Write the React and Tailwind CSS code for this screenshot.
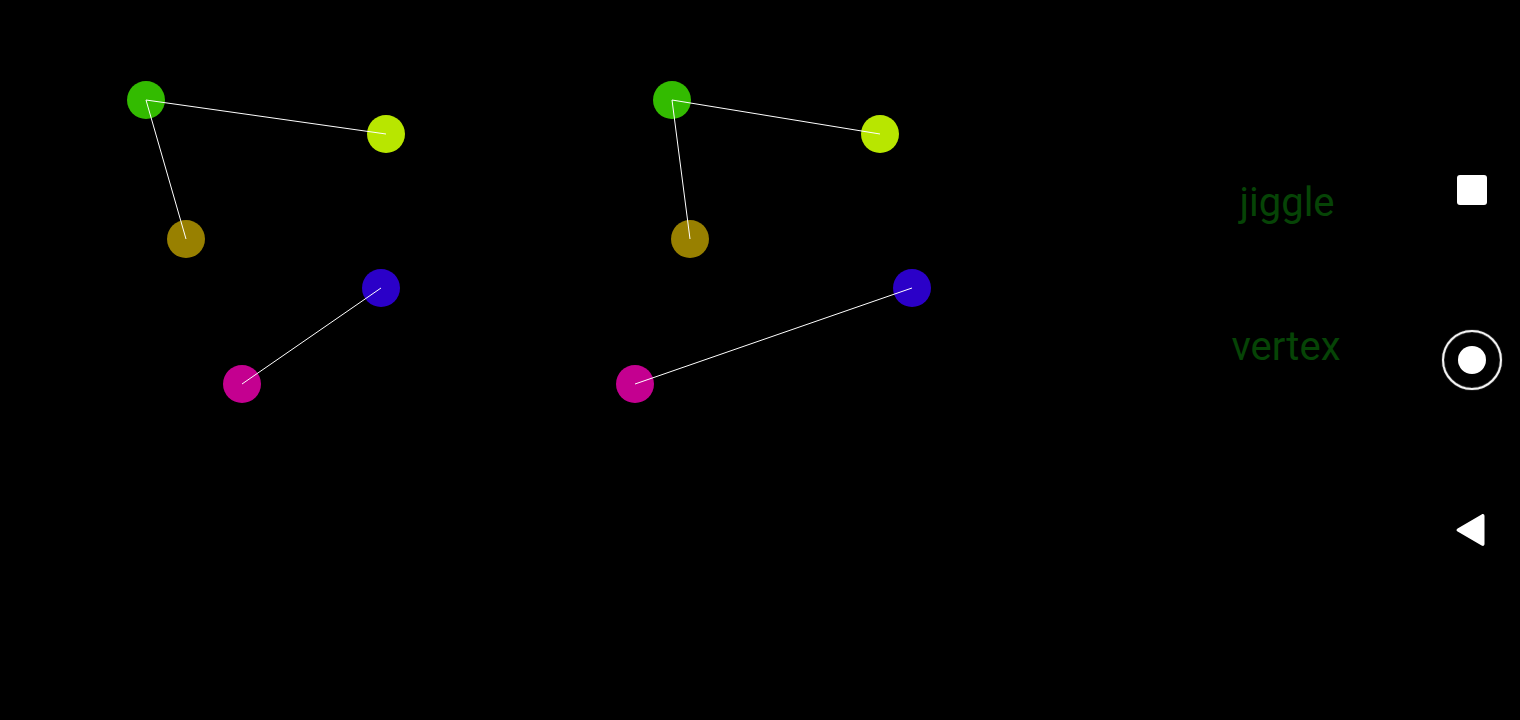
const nodes = [
  { x: 146, y: 100, c: "#33bb00" },
  { x: 386, y: 134, c: "#b8e600" },
  { x: 186, y: 239, c: "#988000" },
  { x: 381, y: 288, c: "#2b00c8" },
  { x: 242, y: 384, c: "#c40090" },
  { x: 672, y: 100, c: "#33bb00" },
  { x: 880, y: 134, c: "#b8e600" },
  { x: 690, y: 239, c: "#988000" },
  { x: 912, y: 288, c: "#2b00c8" },
  { x: 635, y: 384, c: "#c40090" },
];

const edges = [
  [0, 1],
  [0, 2],
  [3, 4],
  [5, 6],
  [5, 7],
  [8, 9],
];

function Graph() {
  return (
    <svg width="1186" height="720" viewBox="0 0 1186 720" className="block shrink-0">
      {nodes.map((n, i) => (
        <circle key={i} cx={n.x} cy={n.y} r="19" fill={n.c} />
      ))}
      {edges.map(([a, b], i) => (
        <line
          key={i}
          x1={nodes[a].x}
          y1={nodes[a].y}
          x2={nodes[b].x}
          y2={nodes[b].y}
          stroke="#ffffff"
          strokeWidth="1"
        />
      ))}
    </svg>
  );
}

export default function App() {
  return (
    <div className="flex h-[720px] w-[1520px] overflow-hidden bg-black">
      <Graph />
      <div className="flex w-[200px] shrink-0 flex-col items-center gap-[97px] pt-[179px] font-['Roboto',sans-serif] text-[40px] leading-[47px] text-[#064406]">
        <div className="ml-[2px]">jiggle</div>
        <div>vertex</div>
      </div>
      <div className="ml-auto flex w-[96px] shrink-0 flex-col items-center">
        <div className="mt-[175px] h-[30px] w-[30px] rounded-[3px] bg-white" />
        <div className="mt-[125px] flex h-[60px] w-[60px] items-center justify-center rounded-full border-[2.5px] border-[#f4f4f4] shadow-[0_0_1px_#ffffff,inset_0_0_1px_#ffffff]">
          <div className="h-[28px] w-[28px] rounded-full bg-white" />
        </div>
        <svg width="30" height="34" viewBox="0 0 30 34" className="mt-[123px] mr-[2px] block">
          <path
            d="M25.6 1.5 C27.2 0.5 28.5 1.2 28.5 3.2 L28.5 30.8 C28.5 32.8 27.2 33.5 25.6 32.5 L1.6 18.6 C0.2 17.7 0.2 16.3 1.6 15.4 Z"
            fill="#ffffff"
          />
        </svg>
      </div>
    </div>
  );
}
